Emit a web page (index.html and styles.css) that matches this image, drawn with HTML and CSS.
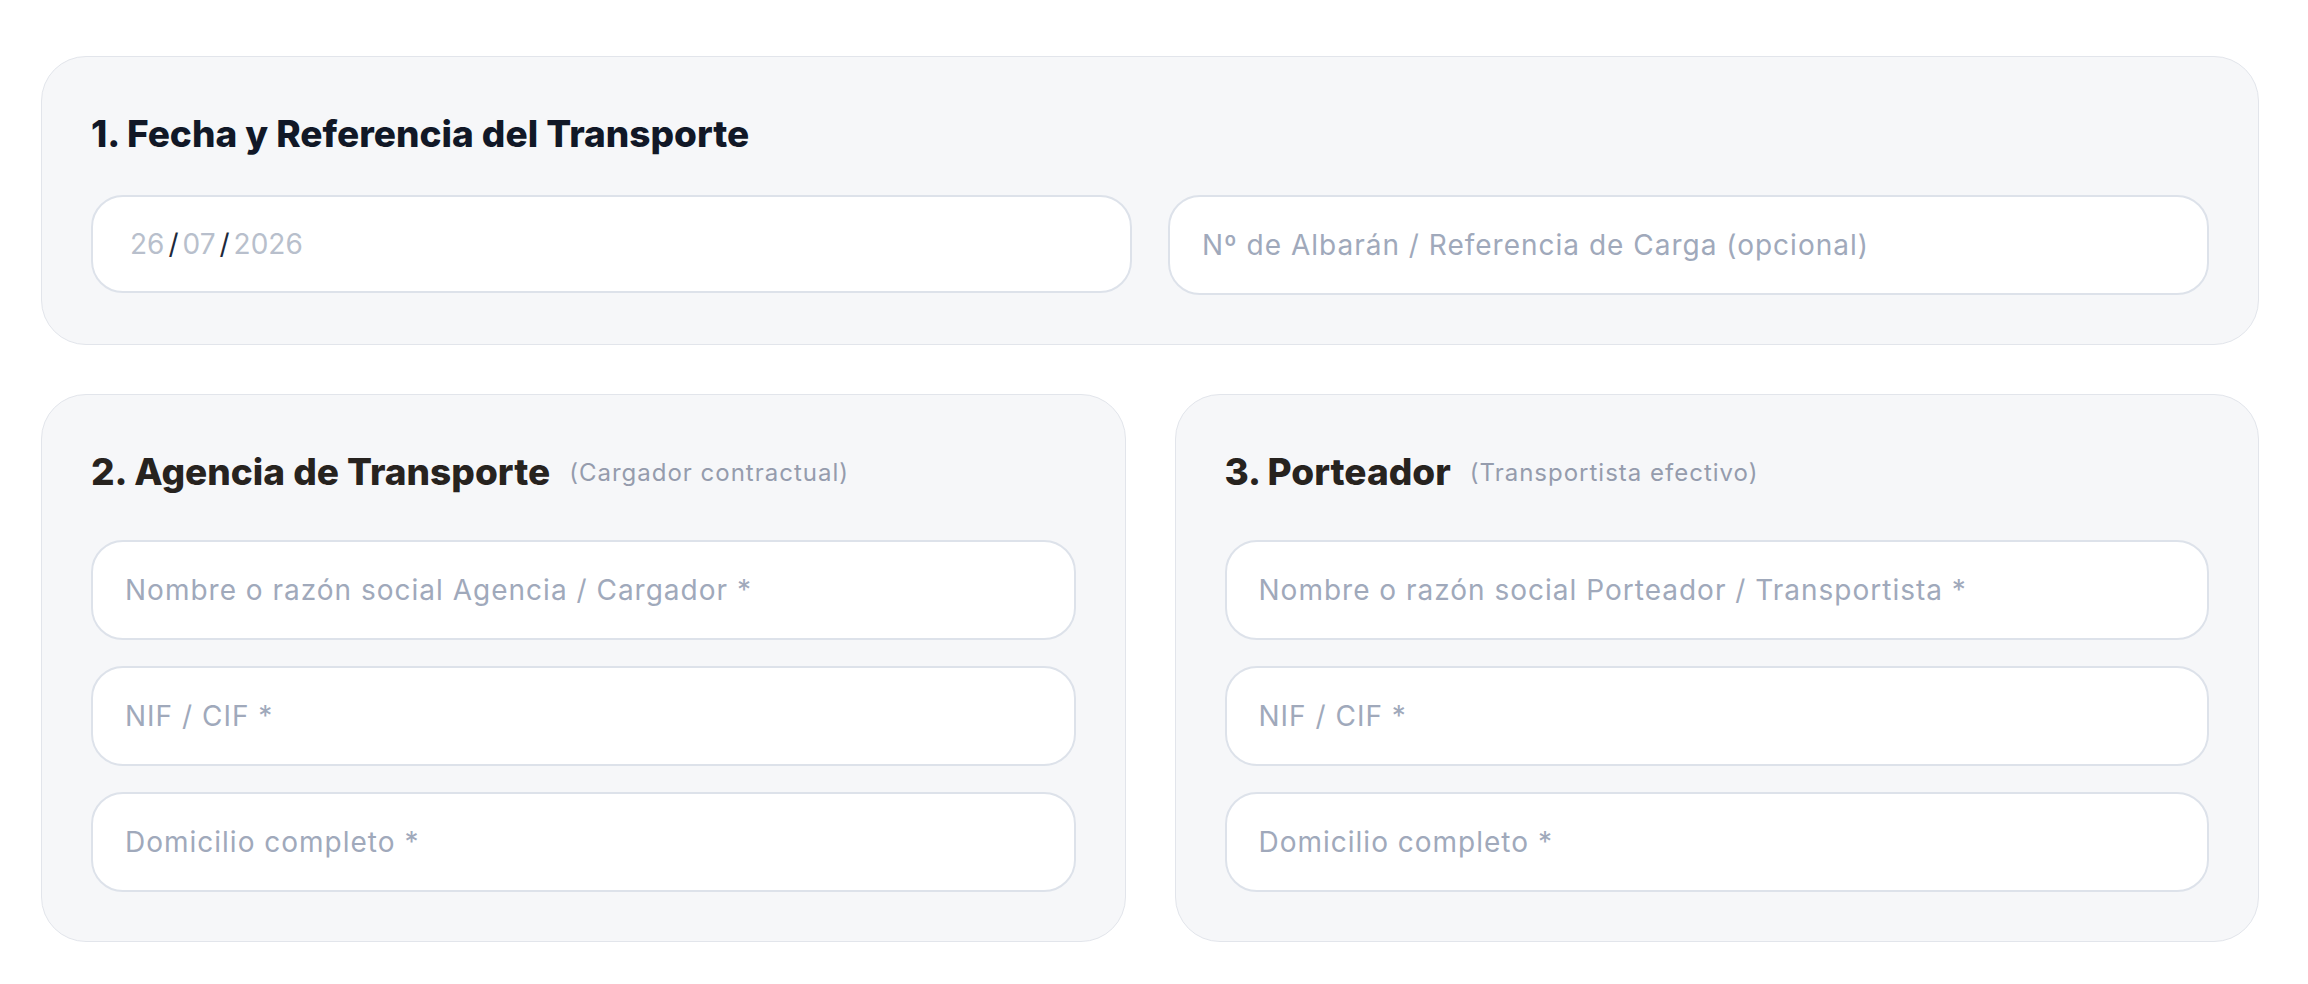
FILE: index.html
```html
<!DOCTYPE html>
<html lang="es">

<head>
    <meta charset="UTF-8">
    <meta name="viewport" content="width=device-width, initial-scale=1.0">
    <title>Carta de Porte</title>
    <link rel="stylesheet" href="styles.css">
</head>

<body>
<main class="form">

  <!-- bloque 1: fecha y referencia -->
  <section class="card">
    <h2 class="card-title">1. Fecha y Referencia del Transporte</h2>
    <div class="row">
      <div class="field field-date">
        <span class="date-part">26</span><span class="date-sep">/</span><span class="date-part">07</span><span class="date-sep">/</span><span class="date-part">2026</span>
      </div>
      <input type="text" class="field" placeholder="Nº de Albarán / Referencia de Carga (opcional)">
    </div>
  </section>

  <div class="parties">
    <!-- bloque 2: agencia -->
    <section class="card">
      <div class="card-head">
        <h2 class="card-title dark">2. Agencia de Transporte</h2>
        <span class="card-note">(Cargador contractual)</span>
      </div>
      <div class="stack">
        <input type="text" class="field" placeholder="Nombre o razón social Agencia / Cargador *">
        <input type="text" class="field" placeholder="NIF / CIF *">
        <input type="text" class="field" placeholder="Domicilio completo *">
      </div>
    </section>

    <!-- bloque 3: porteador -->
    <section class="card">
      <div class="card-head">
        <h2 class="card-title dark">3. Porteador</h2>
        <span class="card-note">(Transportista efectivo)</span>
      </div>
      <div class="stack">
        <input type="text" class="field" placeholder="Nombre o razón social Porteador / Transportista *">
        <input type="text" class="field" placeholder="NIF / CIF *">
        <input type="text" class="field" placeholder="Domicilio completo *">
      </div>
    </section>
  </div>

</main>
</body>

</html>
```

FILE: styles.css
```css
body {
    margin: 0;
    background-color: #ffffff;
    font-family: "Inter", "Noto Sans", sans-serif;
}

.form {
    padding: 56px 49px 40px 41px;
    display: flex;
    flex-direction: column;
    gap: 49px;
}

.card {
    background-color: #f6f7f9;
    border: 1px solid #e2e5eb;
    border-radius: 45px;
    padding: 49px;
}

.card-title {
    margin: 0 0 33px;
    font-size: 37px;
    line-height: 56px;
    font-weight: 800;
    letter-spacing: 0;
    color: #111827;
}

.card-title.dark {
    margin: 0;
    color: #27231f;
}

.card-head {
    display: flex;
    align-items: center;
    gap: 19px;
    margin-bottom: 40px;
}

.card-note {
    font-size: 24px;
    letter-spacing: 1px;
    color: #959cad;
}

.row {
    display: grid;
    grid-template-columns: 1fr 1fr;
    gap: 36px;
    align-items: start;
}

.parties {
    display: grid;
    grid-template-columns: 1fr 1fr;
    gap: 49px;
}

.stack {
    display: flex;
    flex-direction: column;
    gap: 26px;
}

.field {
    box-sizing: border-box;
    width: 100%;
    height: 100px;
    padding: 0 32px;
    border: 2px solid #dde2ea;
    border-radius: 32px;
    background-color: #ffffff;
    font-family: "Inter", "Noto Sans", sans-serif;
    font-size: 28px;
    letter-spacing: 1px;
    color: #1e293b;
    outline: none;
}

.field::placeholder {
    color: #a0a9bb;
}

.field-date {
    height: 98px;
    padding-left: 37px;
    display: flex;
    align-items: center;
    letter-spacing: 0;
}

.date-part {
    color: #b8bfcc;
}

.date-sep {
    color: #1e293b;
    padding: 0 4px;
}
```
